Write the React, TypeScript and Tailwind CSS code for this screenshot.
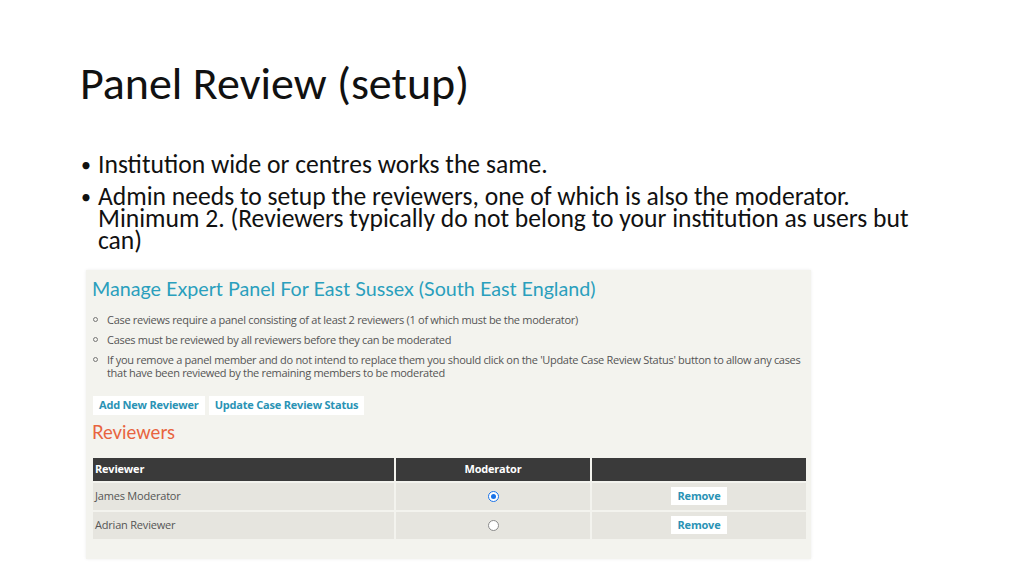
import React from "react";

const notes = [
  "Case reviews require a panel consisting of at least 2 reviewers (1 of which must be the moderator)",
  "Cases must be reviewed by all reviewers before they can be moderated",
  "If you remove a panel member and do not intend to replace them you should click on the 'Update Case Review Status' button to allow any cases that have been reviewed by the remaining members to be moderated",
];

const reviewers = [
  { name: "James Moderator", moderator: true },
  { name: "Adrian Reviewer", moderator: false },
];

function Radio({ checked }: { checked: boolean }) {
  return (
    <span
      className={
        checked
          ? "flex h-[11px] w-[11px] items-center justify-center rounded-full border border-[#1a73e8] bg-white"
          : "flex h-[11px] w-[11px] items-center justify-center rounded-full border border-[#8a8a8a] bg-white"
      }
    >
      {checked && <span className="h-[5px] w-[5px] rounded-full bg-[#1a73e8]" />}
    </span>
  );
}

export default function App() {
  return (
    <div className="h-[576px] w-[1024px] overflow-hidden bg-white text-[#111] [font-family:Carlito,Lato,'Liberation_Sans',sans-serif]">
      <div className="pl-[80px] pt-[55px]">
        <h1 className="text-[46px] font-light leading-[56px]">Panel Review (setup)</h1>

        <ul className="mt-[43px] text-[25.6px] leading-[22px]">
          <li className="flex">
            <span className="w-[18px] shrink-0 pl-[1px] text-[20px]">•</span>
            <span>Institution wide or centres works the same.</span>
          </li>
          <li className="mt-[10px] flex">
            <span className="w-[18px] shrink-0 pl-[1px] text-[20px]">•</span>
            <span className="w-[815px]">
              Admin needs to setup the reviewers, one of which is also the moderator. Minimum 2. (Reviewers
              typically do not belong to your institution as users but can)
            </span>
          </li>
        </ul>

        {/* embedded screenshot of the admin page */}
        <div className="ml-[6px] mt-[18px] h-[289px] w-[725px] bg-[#f3f3ee] pl-[6px] pr-[2px] pt-[6px] shadow-[0_0_3px_rgba(0,0,0,0.08)] [font-family:'Liberation_Sans',sans-serif]">
          <h2 className="text-[19.7px] leading-[26px] text-[#2a9fbd] [font-family:Lato,sans-serif]">
            Manage Expert Panel For East Sussex (South East England)
          </h2>

          <ul className="mt-[11px] text-[11px] leading-[13px] text-[#555] [font-family:'Open_Sans',sans-serif] tracking-[-0.3px]">
            {notes.map((n, i) => (
              <li key={i} className="mb-[7px] flex">
                <span className="mt-[4px] mr-[9px] ml-[1px] h-[5px] w-[5px] shrink-0 rounded-full border border-[#777]" />
                <span className="max-w-[703px]">{n}</span>
              </li>
            ))}
          </ul>

          <div className="mt-[17px] flex gap-[4px] pl-[1px] text-[11px] font-bold text-[#2a93b5] [font-family:'Open_Sans',sans-serif] tracking-[-0.2px]">
            <span className="bg-white px-[6px] py-[1px]">Add New Reviewer</span>
            <span className="bg-white px-[6px] py-[1px]">Update Case Review Status</span>
          </div>

          <h3 className="mt-[5px] text-[18.5px] leading-[24px] text-[#e8643f] [font-family:Lato,sans-serif]">Reviewers</h3>

          <table className="-ml-[1px] mt-[12px] w-[717px] border-separate border-spacing-[2px] text-[11px] [font-family:'Open_Sans',sans-serif] tracking-[-0.2px]">
            <thead>
              <tr className="bg-[#3a3a3a] text-white">
                <th className="h-[23px] w-[301px] px-[2px] text-left font-bold">Reviewer</th>
                <th className="w-[194px] font-bold">Moderator</th>
                <th className="font-bold"></th>
              </tr>
            </thead>
            <tbody>
              {reviewers.map((r) => (
                <tr key={r.name} className="bg-[#e6e5df] text-[#555]">
                  <td className="h-[27px] px-[2px]">{r.name}</td>
                  <td>
                    <div className="flex justify-center">
                      <Radio checked={r.moderator} />
                    </div>
                  </td>
                  <td>
                    <div className="flex justify-center">
                      <span className="bg-white px-[7px] py-[1px] font-bold text-[#2a93b5]">Remove</span>
                    </div>
                  </td>
                </tr>
              ))}
            </tbody>
          </table>
        </div>
      </div>
    </div>
  );
}
